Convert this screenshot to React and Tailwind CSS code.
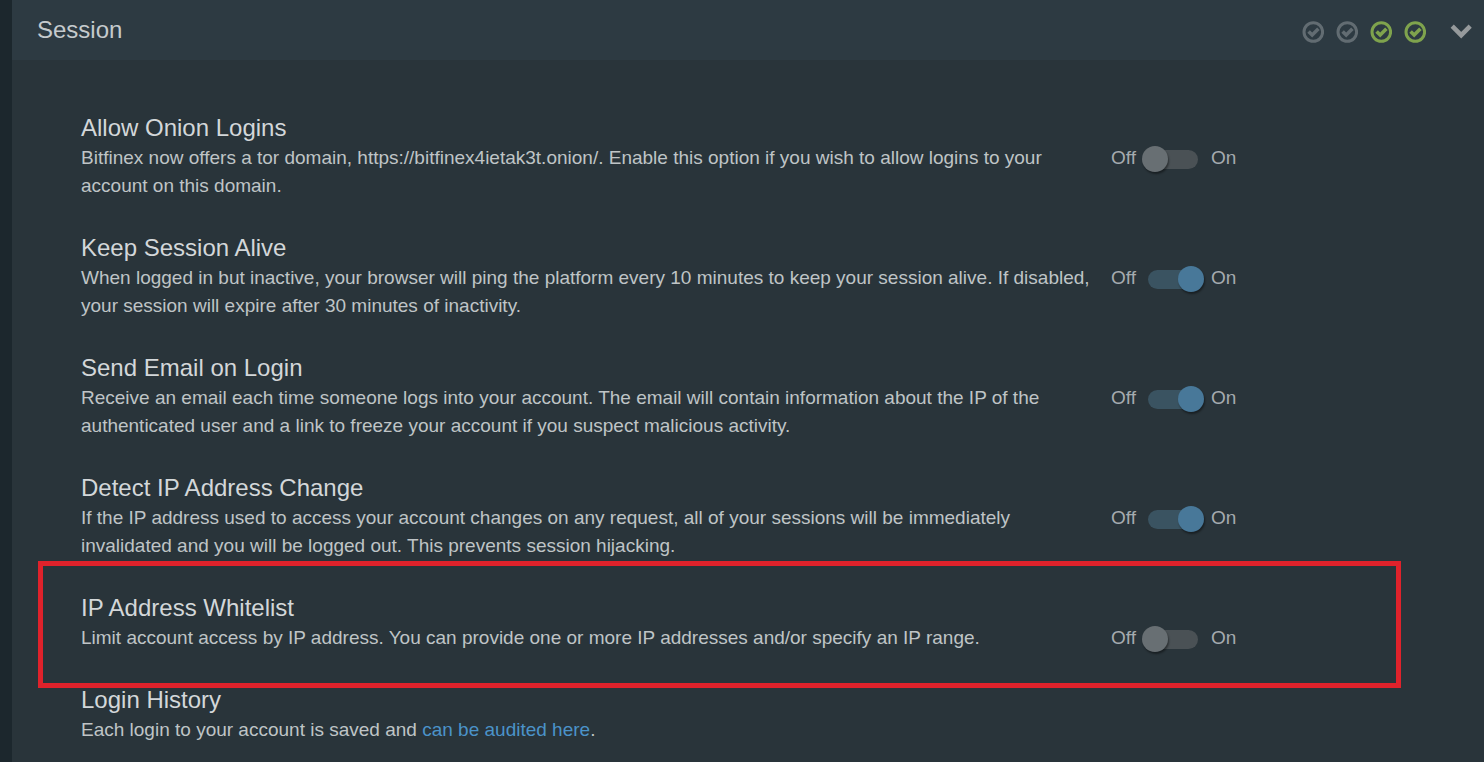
import React, { useState } from 'react';

const settings = [
  {
    id: 'onion',
    title: 'Allow Onion Logins',
    text: 'Bitfinex now offers a tor domain, https://bitfinex4ietak3t.onion/. Enable this option if you wish to allow logins to your account on this domain.',
    enabled: false,
  },
  {
    id: 'keep-alive',
    title: 'Keep Session Alive',
    text: 'When logged in but inactive, your browser will ping the platform every 10 minutes to keep your session alive. If disabled, your session will expire after 30 minutes of inactivity.',
    enabled: true,
  },
  {
    id: 'login-email',
    title: 'Send Email on Login',
    text: 'Receive an email each time someone logs into your account. The email will contain information about the IP of the authenticated user and a link to freeze your account if you suspect malicious activity.',
    enabled: true,
  },
  {
    id: 'ip-change',
    title: 'Detect IP Address Change',
    text: 'If the IP address used to access your account changes on any request, all of your sessions will be immediately invalidated and you will be logged out. This prevents session hijacking.',
    enabled: true,
  },
  {
    id: 'whitelist',
    title: 'IP Address Whitelist',
    text: 'Limit account access by IP address. You can provide one or more IP addresses and/or specify an IP range.',
    enabled: false,
    highlighted: true,
  },
];

const StatusIcon = ({ active }) => (
  <svg
    viewBox="0 0 22 22"
    className={`size-[22px] ${active ? 'text-[#7fa34d]' : 'text-[#626c72]'}`}
    fill="none"
    stroke="currentColor"
    strokeWidth="3"
    aria-hidden="true"
  >
    <circle cx="11.3" cy="11" r="9.3" />
    <path d="M6.6 10.4l3.6 3.6 6.2-6.2" strokeWidth="3.6" />
  </svg>
);

const Toggle = ({ labelId, defaultOn }) => {
  const [on, setOn] = useState(defaultOn);

  return (
    <label className="flex h-7 items-center text-[#a5abaf]">
      <span className="w-[37px]">Off</span>
      <input
        type="checkbox"
        role="switch"
        aria-labelledby={labelId}
        checked={on}
        onChange={(e) => setOn(e.target.checked)}
        className="relative mt-[3px] h-[19px] w-[50px] shrink-0 cursor-pointer appearance-none rounded-full bg-[#4a5155] before:absolute before:-left-[6px] before:-top-1 before:size-[26px] before:rounded-full before:bg-[#686f73] before:shadow-[1px_2px_2px_rgba(0,0,0,0.4)] checked:bg-[#3a5361] checked:before:left-[30px] checked:before:bg-[#487899]"
      />
      <span className="ml-[13px]">On</span>
    </label>
  );
};

const SettingRow = ({ id, title, text, enabled, highlighted }) => (
  <section className="relative">
    <h2 id={id} className="text-2xl text-[#d3d7d9]">{title}</h2>
    <div className="grid grid-cols-[minmax(0,1010px)_auto] justify-start gap-5">
      <p>{text}</p>
      <Toggle labelId={id} defaultOn={enabled} />
    </div>
    {highlighted && (
      <div className="pointer-events-none absolute -bottom-9 -left-[43px] -top-[31px] right-0 border-[5px] border-[#df222b]" />
    )}
  </section>
);

const App = () => (
  <div className="min-h-screen bg-[#1c272d] pl-3 font-['Liberation_Sans',Arial,sans-serif]">
    <main className="min-h-screen bg-[#29343a]">
      {/* Panel header */}
      <header className="flex h-[60px] items-center justify-between bg-[#2d3a42] pl-[25px] pr-3">
        <h1 className="text-2xl text-[#c5cacd]">Session</h1>
        <div className="flex items-center gap-3 pt-1">
          <StatusIcon />
          <StatusIcon />
          <StatusIcon active />
          <StatusIcon active />
          <button type="button" aria-label="Collapse section" className="ml-3 cursor-pointer text-[#969a9c]">
            <svg viewBox="0 0 22 22" className="size-[22px]" fill="none" stroke="currentColor" strokeWidth="4.5" aria-hidden="true">
              <path d="M2.2 5.2l9 9 9-9" />
            </svg>
          </button>
        </div>
      </header>

      {/* Settings list */}
      <div className="flex flex-col gap-8 pb-5 pl-[69px] pr-[83px] pt-[52px] text-[19px] leading-7 text-[#bfc4c6]">
        {settings.map((item) => (
          <SettingRow key={item.id} {...item} />
        ))}
        <section>
          <h2 className="text-2xl text-[#d3d7d9]">Login History</h2>
          <p>
            Each login to your account is saved and{' '}
            <a href="#history" className="text-[#4b93c9]">can be audited here</a>.
          </p>
        </section>
      </div>
    </main>
  </div>
);

export default App;
